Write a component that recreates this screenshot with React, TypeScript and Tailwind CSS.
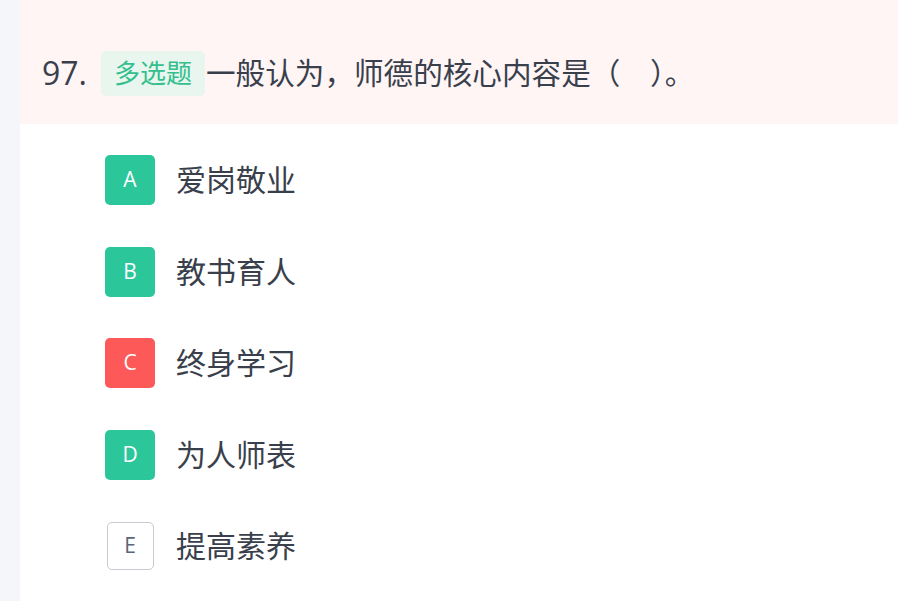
import React from "react";

const options = [
  { key: "A", text: "爱岗敬业", kind: "green" },
  { key: "B", text: "教书育人", kind: "green" },
  { key: "C", text: "终身学习", kind: "red" },
  { key: "D", text: "为人师表", kind: "green" },
  { key: "E", text: "提高素养", kind: "none" },
];

export default function App() {
  return (
    <div
      className="flex h-[601px] w-[898px] overflow-hidden bg-white"
      style={{ fontFamily: '"Open Sans", "Noto Sans CJK SC", sans-serif' }}
    >
      <div className="w-[20px] shrink-0 bg-[#f5f6fa]" />
      <div className="flex flex-1 flex-col">
        <div className="flex h-[124px] items-center bg-[#fff5f5] pl-[22px] pt-[22px]">
          <span className="text-[32px] leading-none text-[#3a3f4c]">97.</span>
          <span className="ml-[14px] flex h-[45px] items-center rounded-[5px] bg-[#e8f6ef] px-[13px] text-[26px] leading-none text-[#34bf8c]">
            多选题
          </span>
          <span className="ml-[1px] whitespace-pre text-[29.6px] leading-none text-[#3a3f4c]">
            一般认为，师德的核心内容是（　）。
          </span>
        </div>
        <div className="flex flex-col gap-[41.5px] pl-[85px] pt-[31px]">
          {options.map((o) => (
            <div key={o.key} className="flex h-[50px] items-center">
              <div className="flex w-[50px] items-center justify-center">
                {o.kind === "none" ? (
                  <div className="flex h-[48px] w-[47px] items-center justify-center rounded-[5px] border border-[#c6cad1] text-[21px] text-[#5b6577]">
                    {o.key}
                  </div>
                ) : (
                  <div
                    className={
                      "flex h-[50px] w-[50px] items-center justify-center rounded-[5px] text-[21px] text-white " +
                      (o.kind === "red" ? "bg-[#fd5959]" : "bg-[#2cc69b]")
                    }
                  >
                    {o.key}
                  </div>
                )}
              </div>
              <span className="ml-[21px] text-[30px] leading-none text-[#3a3f4c]">{o.text}</span>
            </div>
          ))}
        </div>
      </div>
    </div>
  );
}
